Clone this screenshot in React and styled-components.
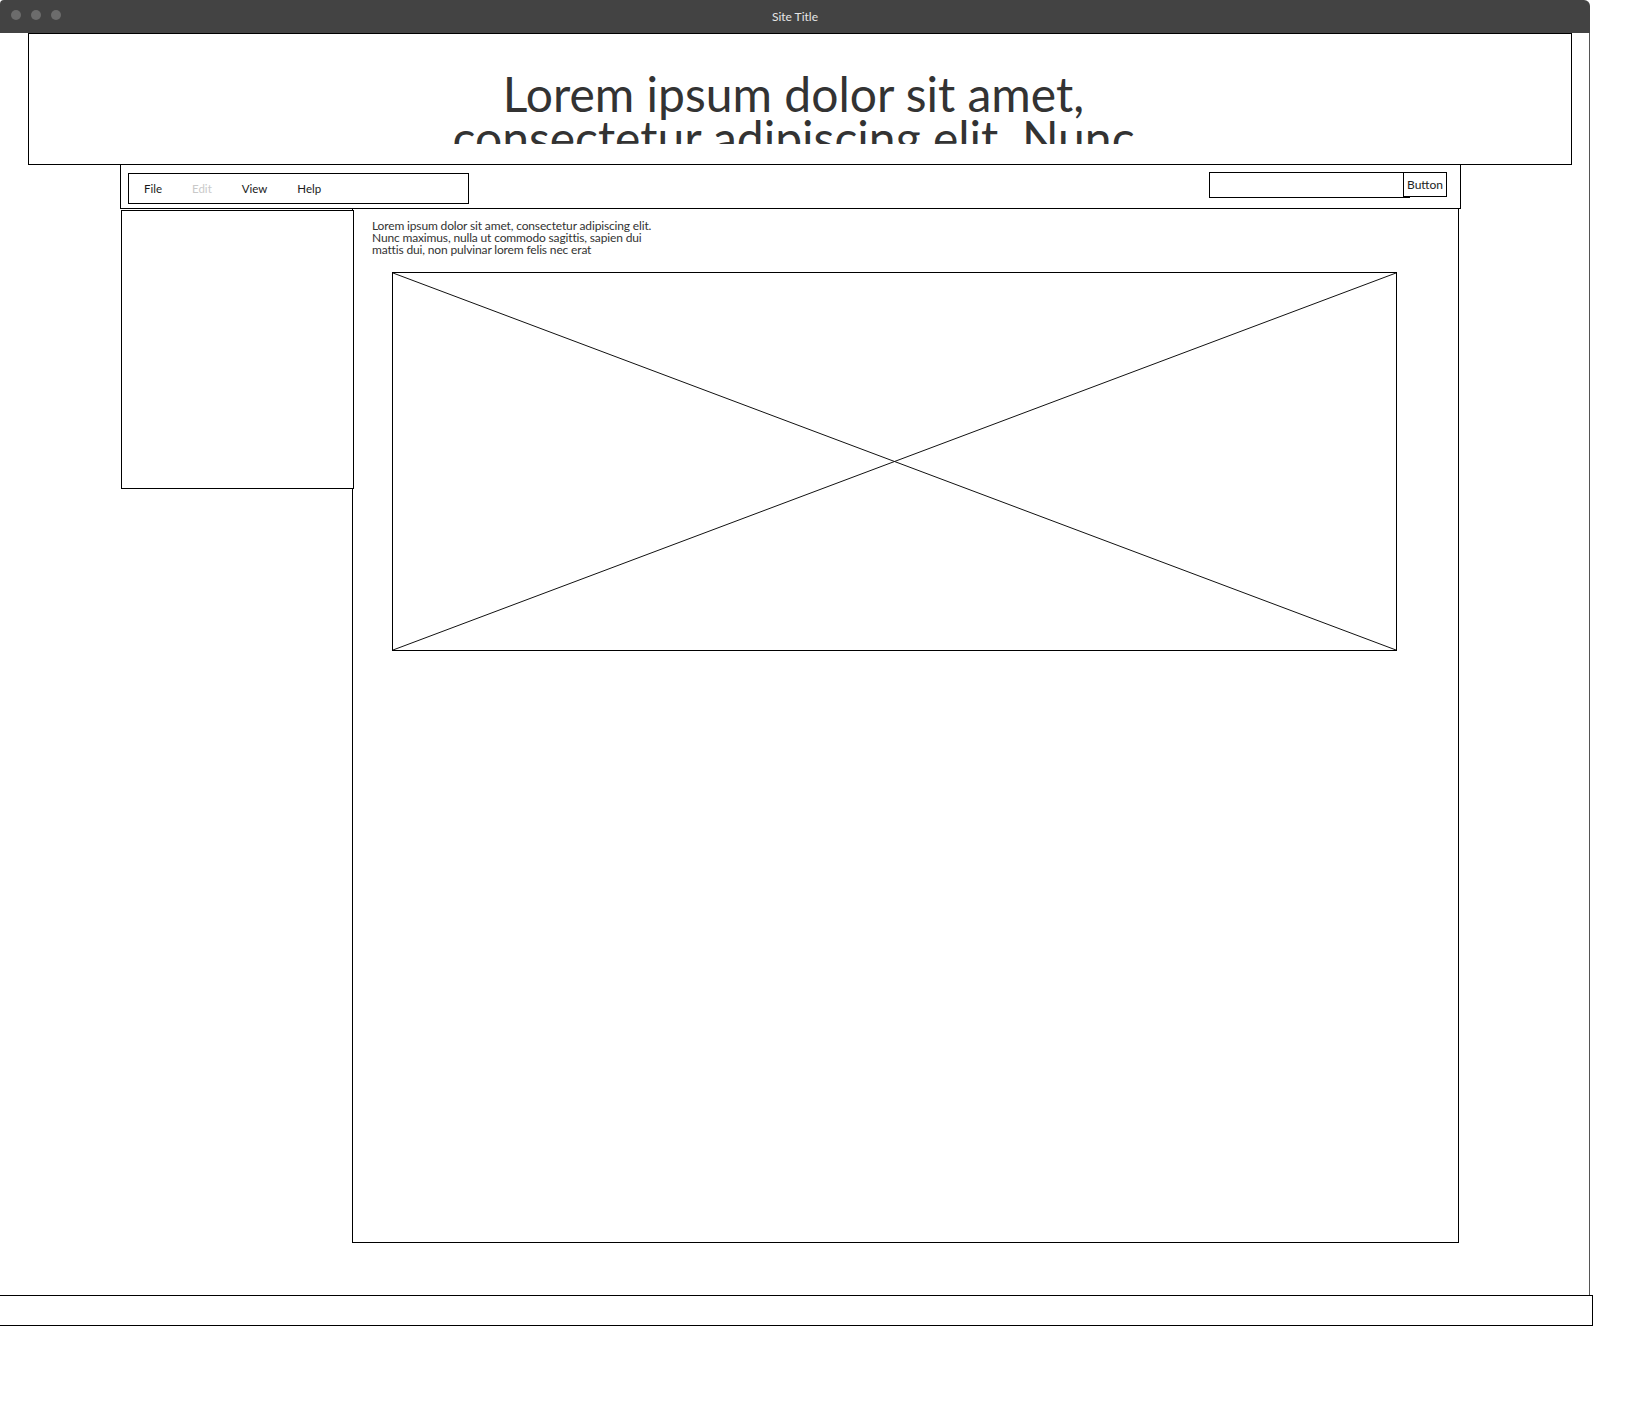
import React from 'react';
import styled, { createGlobalStyle } from 'styled-components';

const GlobalStyle = createGlobalStyle`
  * {
    box-sizing: border-box;
  }

  body {
    margin: 0;
    background: #fff;
    font-family: Lato, 'Open Sans', sans-serif;
    color: #222;
  }
`;

const MENU_ITEMS = [
  { label: 'File' },
  { label: 'Edit', disabled: true },
  { label: 'View' },
  { label: 'Help' },
];

function App() {
  return (
    <>
      <GlobalStyle />
      <Window>
        <TitleBar>
          <Dots>
            <Dot />
            <Dot />
            <Dot />
          </Dots>
          <SiteTitle>Site Title</SiteTitle>
        </TitleBar>
        <WindowBody>
          <Header>
            <Headline>
              Lorem ipsum dolor sit amet, consectetur adipiscing elit. Nunc
              maximus, nulla ut commodo sagittis
            </Headline>
          </Header>
          <NavBar>
            <Menu>
              {MENU_ITEMS.map(item => (
                <MenuItem key={item.label} disabled={item.disabled}>
                  {item.label}
                </MenuItem>
              ))}
            </Menu>
            <Search>
              <SearchInput type="text" />
              <SearchButton type="button">Button</SearchButton>
            </Search>
          </NavBar>
          <Columns>
            <Sidebar />
            <Main>
              <Intro>
                Lorem ipsum dolor sit amet, consectetur adipiscing elit. Nunc
                maximus, nulla ut commodo sagittis, sapien dui mattis dui, non
                pulvinar lorem felis nec erat
              </Intro>
              <ImagePlaceholder>
                <svg
                  width="100%"
                  height="100%"
                  viewBox="0 0 1003 377"
                  preserveAspectRatio="none"
                >
                  <line x1="0" y1="0" x2="1003" y2="377" stroke="#111" strokeWidth="1" />
                  <line x1="1003" y1="0" x2="0" y2="377" stroke="#111" strokeWidth="1" />
                </svg>
              </ImagePlaceholder>
            </Main>
          </Columns>
        </WindowBody>
      </Window>
      <Footer />
    </>
  );
}

export default App;

const Window = styled.div`
  width: 1590px;
`;

const TitleBar = styled.header`
  position: relative;
  display: flex;
  align-items: center;
  justify-content: center;
  height: 33px;
  background-color: #434343;
  border-radius: 4px 6px 0 0;
`;

const Dots = styled.div`
  position: absolute;
  left: 11px;
  top: 10px;
  display: flex;
  gap: 10px;
`;

const Dot = styled.span`
  width: 10px;
  height: 10px;
  border-radius: 50%;
  background-color: #6c6c6c;
`;

const SiteTitle = styled.span`
  font-size: 12px;
  color: #e6e6e6;
  margin-top: -1px;
`;

const WindowBody = styled.div`
  height: 1262px;
  border-right: 1px solid #555;
`;

const Header = styled.section`
  position: relative;
  z-index: 2;
  width: 1544px;
  height: 132px;
  margin-left: 28px;
  padding: 38px 13px 0 0;
  border: 1px solid #000;
  background-color: #fff;
`;

const Headline = styled.h1`
  max-width: 760px;
  height: 72px;
  margin: 0 auto;
  overflow: hidden;
  font-size: 48px;
  font-weight: 400;
  line-height: 44px;
  color: #333;
  text-align: center;
`;

const NavBar = styled.nav`
  display: flex;
  align-items: flex-start;
  justify-content: space-between;
  width: 1341px;
  height: 45px;
  margin: -1px 0 0 120px;
  padding: 8px 13px 0 7px;
  border: 1px solid #000;
`;

const Menu = styled.ul`
  display: flex;
  align-items: center;
  width: 341px;
  height: 31px;
  margin: 0;
  padding: 0;
  list-style: none;
  border: 1px solid #000;
`;

const MenuItem = styled.li`
  padding: 0 15px;
  font-size: 11.5px;
  color: ${props => (props.disabled ? '#c9c9c9' : '#1a1a1a')};
`;

const Search = styled.div`
  display: flex;
  align-items: flex-start;
  margin-top: -1px;
`;

const SearchInput = styled.input`
  width: 201px;
  height: 26px;
  margin: 0;
  padding: 0 4px;
  border: 1px solid #000;
  border-radius: 0;
  outline: none;
  background: #fff;
`;

const SearchButton = styled.button`
  width: 44px;
  height: 25px;
  margin: 0 0 0 -7px;
  padding: 0;
  border: 1px solid #000;
  border-radius: 0;
  background: #fff;
  font-family: Lato, 'Open Sans', sans-serif;
  font-size: 12px;
  color: #222;
`;

const Columns = styled.div`
  display: flex;
  align-items: flex-start;
`;

const Sidebar = styled.aside`
  position: relative;
  z-index: 1;
  flex: none;
  width: 233px;
  height: 279px;
  margin: 1px 0 0 121px;
  border: 1px solid #000;
  background-color: #fff;
`;

const Main = styled.main`
  flex: none;
  width: 1107px;
  height: 1035px;
  margin: -1px 0 0 -2px;
  padding: 11px 0 0 19px;
  border: 1px solid #000;
`;

const Intro = styled.p`
  width: 282px;
  margin: 0 0 16px;
  font-size: 12px;
  line-height: 12px;
  letter-spacing: -0.15px;
  color: #333;
`;

const ImagePlaceholder = styled.div`
  width: 1005px;
  height: 379px;
  margin-left: 20px;
  border: 1px solid #000;

  svg {
    display: block;
  }
`;

const Footer = styled.footer`
  width: 1593px;
  height: 31px;
  border: 1px solid #000;
  border-left: none;
`;
